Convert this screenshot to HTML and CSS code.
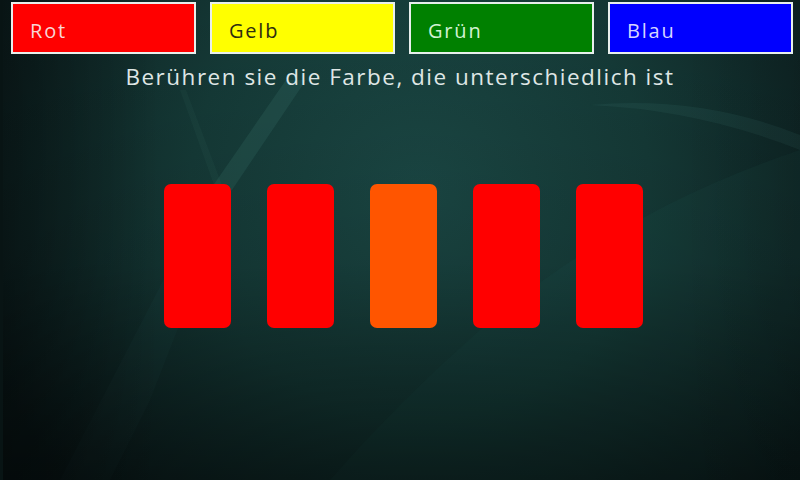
FILE: index.html
```html
<!DOCTYPE html>
<html lang="de">
<head>
<meta charset="utf-8">
<link rel="stylesheet" href="styles.css">
</head>
<body>
<div class="screen">
  <svg class="bg" width="800" height="480" viewBox="0 0 800 480" aria-hidden="true">
    <defs>
      <radialGradient id="glow" cx="420" cy="190" r="460" gradientUnits="userSpaceOnUse">
        <stop offset="0" stop-color="#1b4845"/>
        <stop offset="0.5" stop-color="#153a37"/>
        <stop offset="1" stop-color="#0c1e1f"/>
      </radialGradient>
      <linearGradient id="fade" x1="0" y1="0" x2="0" y2="1">
        <stop offset="0" stop-color="#000" stop-opacity="0"/>
        <stop offset="0.55" stop-color="#000" stop-opacity="0.1"/>
        <stop offset="1" stop-color="#000" stop-opacity="0.5"/>
      </linearGradient>
      <linearGradient id="side" x1="0" y1="0" x2="1" y2="0">
        <stop offset="0" stop-color="#000" stop-opacity="0.35"/>
        <stop offset="0.2" stop-color="#000" stop-opacity="0"/>
        <stop offset="0.85" stop-color="#000" stop-opacity="0"/>
        <stop offset="1" stop-color="#000" stop-opacity="0.1"/>
      </linearGradient>
    </defs>
    <rect width="800" height="480" fill="url(#glow)"/>
    <path d="M286 80 L306 80 L232 190 L210 190 Z" fill="#4a8a82" opacity="0.18"/>
    <path d="M210 190 L232 190 L150 400 L110 480 L60 480 Z" fill="#4a8a82" opacity="0.06"/>
    <path d="M180 90 L186 90 L222 185 L214 185 Z" fill="#4a8a82" opacity="0.08"/>
    <path d="M800 150 Q620 210 480 330 Q400 400 330 480 L800 480 L800 150 Z" fill="#2a6a62" opacity="0.10"/>
    <path d="M590 105 Q700 95 800 135 L800 150 Q700 110 590 105 Z" fill="#4a8a82" opacity="0.12"/>
    <rect width="800" height="480" fill="url(#fade)"/>
    <rect width="800" height="480" fill="url(#side)"/>
  </svg>
  <div class="content">
    <div class="buttons">
      <div class="btn rot">Rot</div>
      <div class="btn gelb">Gelb</div>
      <div class="btn gruen">Grün</div>
      <div class="btn blau">Blau</div>
    </div>
    <p class="prompt">Berühren sie die Farbe, die unterschiedlich ist</p>
    <div class="tiles">
      <div class="tile red"></div>
      <div class="tile red"></div>
      <div class="tile orange"></div>
      <div class="tile red"></div>
      <div class="tile red"></div>
    </div>
  </div>
</div>
</body>
</html>
```

FILE: styles.css
```css
html, body {
  margin: 0;
  padding: 0;
  background: #0a1a1b;
}
.screen {
  position: relative;
  width: 800px;
  height: 480px;
  overflow: hidden;
  font-family: "Open Sans", "Noto Sans", sans-serif;
}
.bg {
  position: absolute;
  left: 0;
  top: 0;
}
.screen::before {
  content: "";
  position: absolute;
  left: 0;
  top: 0;
  width: 3px;
  height: 480px;
  background: #081414;
  z-index: 1;
}
.content {
  position: relative;
  z-index: 2;
  display: flex;
  flex-direction: column;
}
.buttons {
  display: flex;
  gap: 14px;
  padding: 2px 0 0 11px;
}
.btn {
  box-sizing: border-box;
  width: 185px;
  height: 52px;
  border: 2px solid #e8efec;
  padding: 4px 0 0 17px;
  display: flex;
  align-items: center;
  font-size: 20px;
  letter-spacing: 1.8px;
}
.rot { background: #ff0000; color: #f8d6d6; }
.gelb { background: #ffff00; color: #2e2e10; }
.gruen { background: #008000; color: #d2f2d2; }
.blau { background: #0000ff; color: #d6d6ff; }
.prompt {
  margin: 8px 0 0 0;
  text-align: center;
  font-size: 22.5px;
  line-height: 30px;
  color: #dfe6e5;
  letter-spacing: 1.5px;
}
.tiles {
  display: flex;
  gap: 36px;
  padding-left: 164px;
  margin-top: 92px;
}
.tile {
  width: 67px;
  height: 144px;
  border-radius: 7px;
}
.red { background: #ff0000; }
.orange { background: #ff5500; }
```
